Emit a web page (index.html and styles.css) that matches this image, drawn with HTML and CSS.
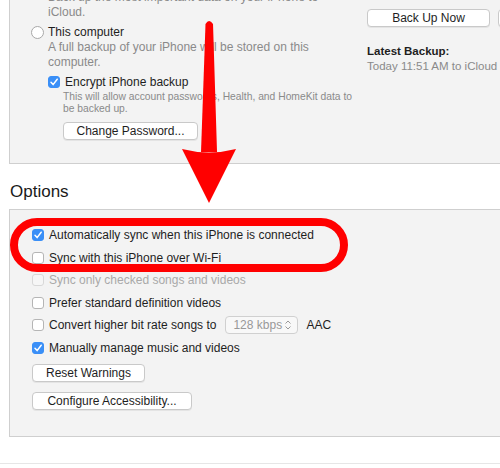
FILE: index.html
```html
<!DOCTYPE html>
<html>
<head>
<meta charset="utf-8">
<link rel="stylesheet" href="styles.css">
</head>
<body>
<div class="page">
  <section class="backup">
    <div class="col-left">
      <p class="desc">Back up the most important data on your iPhone to<br>iCloud.</p>
      <div class="radio-row"><span class="radio"></span><span>This computer</span></div>
      <p class="desc">A full backup of your iPhone will be stored on this<br>computer.</p>
      <div class="sub">
        <div class="check-row"><span class="cb on"><svg viewBox="0 0 12 12"><path d="M3 6.3 L5.1 8.6 L9.2 3.2" fill="none" stroke="#fff" stroke-width="1.5" stroke-linecap="round" stroke-linejoin="round"/></svg></span><span>Encrypt iPhone backup</span></div>
        <p class="small">This will allow account passwords, Health, and HomeKit data to<br>be backed up.</p>
        <div class="btn btn-change">Change Password...</div>
      </div>
    </div>
    <div class="col-right">
      <div class="btn-line">
        <div class="btn btn-backup">Back Up Now</div>
        <div class="btn btn-restore">Restore Backup...</div>
      </div>
      <div class="latest-title">Latest Backup:</div>
      <div class="latest">Today 11:51 AM to iCloud</div>
    </div>
  </section>

  <h2 class="heading">Options</h2>

  <section class="options">
    <div class="opt"><span class="cb on"><svg viewBox="0 0 12 12"><path d="M3 6.3 L5.1 8.6 L9.2 3.2" fill="none" stroke="#fff" stroke-width="1.5" stroke-linecap="round" stroke-linejoin="round"/></svg></span><span>Automatically sync when this iPhone is connected</span></div>
    <div class="opt"><span class="cb"></span><span>Sync with this iPhone over Wi-Fi</span></div>
    <div class="opt disabled"><span class="cb"></span><span>Sync only checked songs and videos</span></div>
    <div class="opt"><span class="cb"></span><span>Prefer standard definition videos</span></div>
    <div class="opt"><span class="cb"></span><span>Convert higher bit rate songs to</span>
      <span class="select"><span>128 kbps</span><svg class="updown" viewBox="0 0 8 12"><path d="M1.5 4.5 L4 2 L6.5 4.5 M1.5 7.5 L4 10 L6.5 7.5" fill="none" stroke="#999" stroke-width="1"/></svg></span>
      <span class="aac">AAC</span></div>
    <div class="opt"><span class="cb on"><svg viewBox="0 0 12 12"><path d="M3 6.3 L5.1 8.6 L9.2 3.2" fill="none" stroke="#fff" stroke-width="1.5" stroke-linecap="round" stroke-linejoin="round"/></svg></span><span>Manually manage music and videos</span></div>
    <div class="btn btn-reset">Reset Warnings</div>
    <div class="btn btn-access">Configure Accessibility...</div>
  </section>

  <div class="footer-line"></div>

  <div class="ring"></div>
  <svg class="arrow" viewBox="0 0 500 468" width="500" height="468">
    <path d="M205.5 24 Q209 18 213 24 L217 152 L201 152 Z" fill="#f00"/>
    <path d="M182 149 Q209 156 236 149 L209 203 Z" fill="#f00"/>
  </svg>
</div>
</body>
</html>
```

FILE: styles.css
```css
html, body {
  margin: 0;
  padding: 0;
  background: #fff;
}
body {
  width: 500px;
  height: 468px;
  overflow: hidden;
  font-family: "Liberation Sans", Arial, sans-serif;
  color: #1e1e1e;
  white-space: nowrap;
}
.page {
  position: relative;
  width: 500px;
  height: 468px;
  overflow: hidden;
}
.backup {
  margin: -20px 0 0 9px;
  width: 600px;
  box-sizing: border-box;
  background: #f3f3f3;
  border-left: 1px solid #cfcfcf;
  border-bottom: 1px solid #cfcfcf;
  display: flex;
  padding-bottom: 23px;
}
.col-left {
  flex: none;
  width: 357px;
  padding-top: 9.5px;
  box-sizing: border-box;
}
.desc {
  margin: 0 0 0 38px;
  font-size: 12px;
  line-height: 15px;
  color: #8a8a8a;
}
.radio-row {
  margin: 5px 0 0 21px;
  display: flex;
  align-items: center;
  gap: 4px;
  font-size: 12px;
  line-height: 15px;
}
.radio {
  width: 11px;
  height: 11px;
  border: 1px solid #a8a8a8;
  border-radius: 50%;
  background: #fff;
}
.sub {
  margin: 5px 0 0 38px;
}
.check-row {
  display: flex;
  align-items: center;
  gap: 5px;
  font-size: 12px;
  line-height: 15px;
}
.cb {
  display: inline-block;
  box-sizing: border-box;
  width: 12px;
  height: 12px;
  border: 1px solid #b5b5b5;
  border-radius: 3px;
  background: #fff;
  flex: none;
}
.cb svg {
  display: block;
  width: 12px;
  height: 12px;
  margin: -1px;
}
.cb.on {
  background: #3a8ff7;
  border-color: #3a8ff7;
}
.small {
  margin: 1.5px 0 0 15px;
  font-size: 10.3px;
  line-height: 12px;
  color: #8a8a8a;
}
.btn {
  box-sizing: border-box;
  height: 18px;
  background: #fff;
  border: 1px solid #c9c9c9;
  border-radius: 4px;
  box-shadow: 0 1px 0 rgba(0,0,0,0.06);
  font-size: 12px;
  line-height: 16px;
  text-align: center;
  color: #1e1e1e;
}
.btn-change {
  margin: 7px 0 0 15px;
  width: 135px;
}
.col-right {
  flex: none;
  padding-top: 29px;
}
.btn-line {
  display: flex;
  gap: 8px;
}
.btn-backup {
  width: 123px;
}
.btn-restore {
  width: 123px;
}
.latest-title {
  margin-top: 17px;
  font-size: 11.5px;
  line-height: 15px;
  font-weight: bold;
}
.latest {
  font-size: 11.5px;
  line-height: 15px;
  color: #8a8a8a;
}
.heading {
  margin: 18px 0 7px 10px;
  font-size: 17px;
  line-height: 20px;
  font-weight: normal;
  color: #1a1a1a;
}
.options {
  margin-left: 9px;
  width: 600px;
  box-sizing: border-box;
  background: #f3f3f3;
  border-top: 1px solid #cfcfcf;
  border-left: 1px solid #cfcfcf;
  border-bottom: 1px solid #cfcfcf;
  padding: 13.7px 0 26px 22px;
}
.opt {
  height: 22.6px;
  display: flex;
  align-items: center;
  gap: 5px;
  font-size: 12px;
}
.opt.disabled {
  color: #a9a9a9;
}
.opt.disabled .cb {
  border-color: #d8d8d8;
  background: #f6f6f6;
}
.select {
  margin-left: 4px;
  box-sizing: border-box;
  width: 73px;
  height: 18px;
  border: 1px solid #d0d0d0;
  border-radius: 4px;
  background: #f8f8f8;
  display: flex;
  align-items: center;
  justify-content: space-between;
  padding: 0 5px 0 7px;
  color: #999;
  font-size: 12px;
}
.updown {
  width: 8px;
  height: 12px;
}
.aac {
  margin-left: 3px;
}
.btn-reset {
  margin-top: 5px;
  width: 113px;
}
.btn-access {
  margin-top: 10px;
  width: 160px;
}
.footer-line {
  margin-top: 26px;
  height: 1px;
  background: #e6e6e6;
}
.ring {
  position: absolute;
  left: 10px;
  top: 218px;
  width: 338px;
  height: 54px;
  box-sizing: border-box;
  border: 8px solid #f00;
  border-radius: 27px;
}
.arrow {
  position: absolute;
  left: 0;
  top: 0;
}
```
